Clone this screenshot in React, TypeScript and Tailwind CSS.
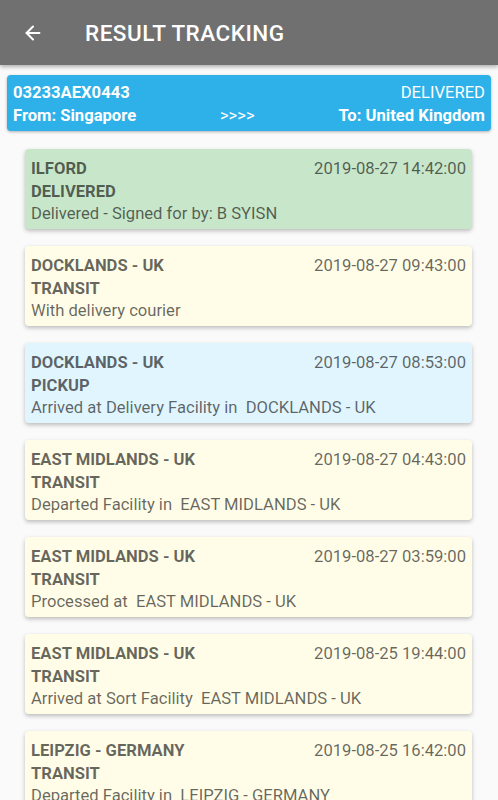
import { ArrowLeft } from "lucide-react";

type Event = {
  place: string;
  status: string;
  time: string;
  note: string;
  tone: "green" | "yellow" | "blue";
};

const events: Event[] = [
  { place: "ILFORD", status: "DELIVERED", time: "2019-08-27 14:42:00", note: "Delivered - Signed for by: B SYISN", tone: "green" },
  { place: "DOCKLANDS - UK", status: "TRANSIT", time: "2019-08-27 09:43:00", note: "With delivery courier", tone: "yellow" },
  { place: "DOCKLANDS - UK", status: "PICKUP", time: "2019-08-27 08:53:00", note: "Arrived at Delivery Facility in \u00a0DOCKLANDS - UK", tone: "blue" },
  { place: "EAST MIDLANDS - UK", status: "TRANSIT", time: "2019-08-27 04:43:00", note: "Departed Facility in \u00a0EAST MIDLANDS - UK", tone: "yellow" },
  { place: "EAST MIDLANDS - UK", status: "TRANSIT", time: "2019-08-27 03:59:00", note: "Processed at \u00a0EAST MIDLANDS - UK", tone: "yellow" },
  { place: "EAST MIDLANDS - UK", status: "TRANSIT", time: "2019-08-25 19:44:00", note: "Arrived at Sort Facility \u00a0EAST MIDLANDS - UK", tone: "yellow" },
  { place: "LEIPZIG - GERMANY", status: "TRANSIT", time: "2019-08-25 16:42:00", note: "Departed Facility in \u00a0LEIPZIG - GERMANY", tone: "yellow" },
];

const toneBg = {
  green: "bg-[#c8e6c9]",
  yellow: "bg-[#fffde7]",
  blue: "bg-[#e1f5fe]",
};

function EventCard({ ev }: { ev: Event }) {
  return (
    <div
      className={`${toneBg[ev.tone]} h-[80px] shrink-0 rounded-[4px] px-[6px] pt-[9px] text-[16.6px] leading-[22.5px] text-black/[0.6] shadow-[0_2px_4px_rgba(0,0,0,0.25)]`}
    >
      <div className="flex justify-between">
        <span className="font-bold">{ev.place}</span>
        <span>{ev.time}</span>
      </div>
      <div className="font-bold">{ev.status}</div>
      <div className="whitespace-nowrap">{ev.note}</div>
    </div>
  );
}

export default function App() {
  return (
    <div className="h-[800px] overflow-hidden bg-[#fafafa] font-['Roboto',sans-serif]">
      {/* Top bar */}
      <div className="flex h-[65px] items-center bg-[#707070] shadow-[0_2px_4px_rgba(0,0,0,0.3)]">
        <ArrowLeft className="ml-[22px] h-[22px] w-[22px] text-white" strokeWidth={2.2} />
        <h1 className="ml-[41px] mt-[2px] text-[22.5px] font-medium tracking-[0.5px] text-white">RESULT TRACKING</h1>
      </div>

      {/* Shipment summary */}
      <div className="mx-[7px] mt-[10px] rounded-[4px] bg-[#2db1e8] px-[6px] pb-[4px] pt-[6px] text-[16.6px] leading-[23px] text-white shadow-[0_1px_3px_rgba(0,0,0,0.3)]">
        <div className="flex justify-between">
          <span className="font-bold">03233AEX0443</span>
          <span>DELIVERED</span>
        </div>
        <div className="flex justify-between">
          <span className="font-bold">From: Singapore</span>
          <span>&gt;&gt;&gt;&gt;</span>
          <span className="font-bold">To: United Kingdom</span>
        </div>
      </div>

      {/* Events */}
      <div className="ml-[25px] mr-[26px] mt-[18px] flex flex-col gap-[17px]">
        {events.map((ev, i) => (
          <EventCard key={i} ev={ev} />
        ))}
      </div>
    </div>
  );
}
